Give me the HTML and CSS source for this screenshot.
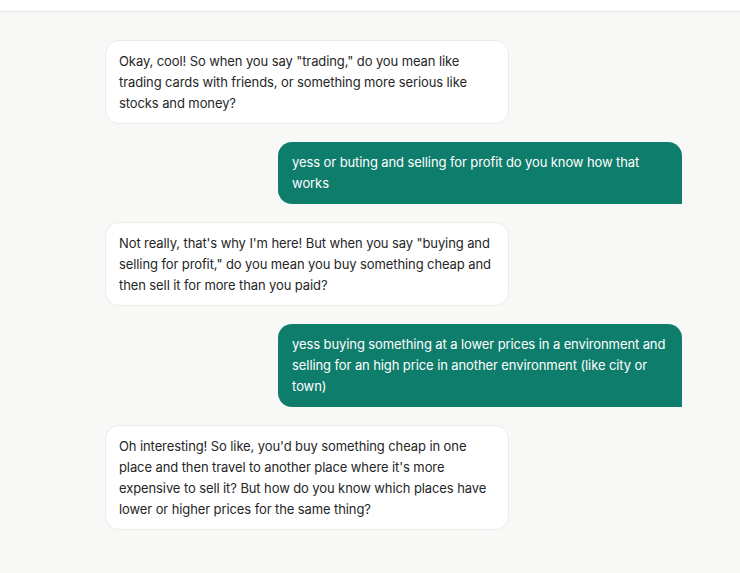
FILE: index.html
```html
<!DOCTYPE html>
<html>
<head>
<meta charset="utf-8">
<link rel="stylesheet" href="styles.css">
</head>
<body>
<div class="topbar"></div>
<main class="chat">
  <div class="msg bot">Okay, cool! So when you say "trading," do you mean like trading cards with friends, or something more serious like stocks and money?</div>
  <div class="msg user">yess or buting and selling for profit do you know how that works</div>
  <div class="msg bot">Not really, that's why I'm here! But when you say "buying and selling for profit," do you mean you buy something cheap and then sell it for more than you paid?</div>
  <div class="msg user">yess buying something at a lower prices in a environment and selling for an high price in another environment (like city or town)</div>
  <div class="msg bot">Oh interesting! So like, you'd buy something cheap in one place and then travel to another place where it's more expensive to sell it? But how do you know which places have lower or higher prices for the same thing?</div>
</main>
</body>
</html>
```
FILE: styles.css
```css
html, body {
  margin: 0;
  padding: 0;
  background: #f8f8f6;
  font-family: Inter, "Noto Sans", sans-serif;
  -webkit-font-smoothing: antialiased;
}
.topbar {
  height: 11px;
  background: #ffffff;
  border-bottom: 1px solid #e6e6e3;
}
.chat {
  width: 577px;
  margin-left: 105px;
  padding-top: 28px;
  display: flex;
  flex-direction: column;
  gap: 18px;
}
.msg {
  max-width: 70%;
  box-sizing: border-box;
  font-size: 13px;
  line-height: 21px;
  letter-spacing: -0.1px;
  border-radius: 14px;
}
.bot {
  align-self: flex-start;
  padding: 10px 12px 9px 13px;
  background: #ffffff;
  color: #262626;
  border: 1px solid #ebebe8;
}
.user {
  align-self: flex-end;
  padding: 10px 12px 10px 14px;
  background: #0f7d6b;
  color: #ffffff;
  border-bottom-right-radius: 0;
}
```
